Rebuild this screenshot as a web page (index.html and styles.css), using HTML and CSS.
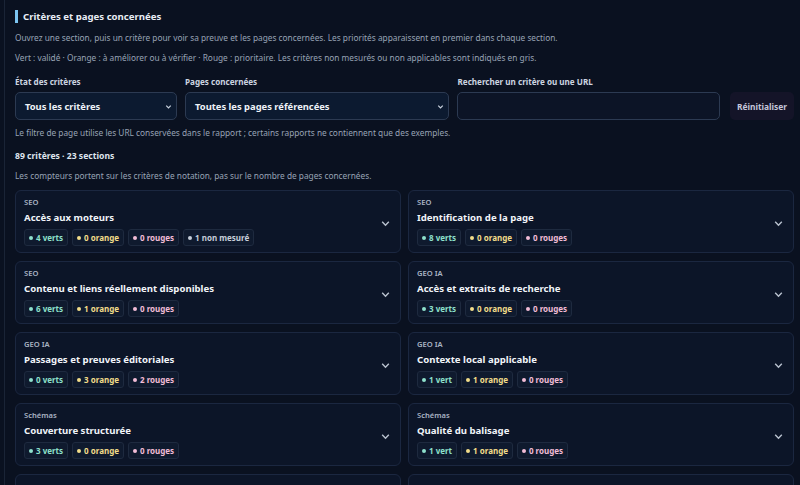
FILE: index.html
```html
<!DOCTYPE html>
<html lang="fr">

<head>
    <meta charset="UTF-8">
    <meta name="viewport" content="width=device-width, initial-scale=1.0">
    <title>Critères et pages concernées</title>
    <link rel="stylesheet" href="styles.css">
</head>

<body>

    <div class="panel">
        <h2 class="titre">Critères et pages concernées</h2>
        <p class="texte">Ouvrez une section, puis un critère pour voir sa preuve et les pages concernées. Les priorités apparaissent en premier dans chaque section.</p>
        <p class="texte">Vert : validé · Orange : à améliorer ou à vérifier · Rouge : prioritaire. Les critères non mesurés ou non applicables sont indiqués en gris.</p>

        <div class="filtres">
            <div class="champ champ-etat">
                <label>État des critères</label>
                <div class="select">Tous les critères
                    <svg viewBox="0 0 10 10"><path d="M2.5 4l2.5 2.5 2.5-2.5"/></svg>
                </div>
            </div>
            <div class="champ champ-pages">
                <label>Pages concernées</label>
                <div class="select">Toutes les pages référencées
                    <svg viewBox="0 0 10 10"><path d="M2.5 4l2.5 2.5 2.5-2.5"/></svg>
                </div>
            </div>
            <div class="champ champ-recherche">
                <label>Rechercher un critère ou une URL</label>
                <input type="text">
            </div>
            <button class="btn-reset">Réinitialiser</button>
        </div>

        <p class="texte">Le filtre de page utilise les URL conservées dans le rapport ; certains rapports ne contiennent que des exemples.</p>
        <p class="compte">89 critères · 23 sections</p>
        <p class="texte">Les compteurs portent sur les critères de notation, pas sur le nombre de pages concernées.</p>

        <div class="grille">
            <div class="carte">
                <div class="carte-info">
                    <div class="categorie">SEO</div>
                    <div class="nom">Accès aux moteurs</div>
                    <div class="puces">
                        <span class="puce vert">4 verts</span>
                        <span class="puce orange">0 orange</span>
                        <span class="puce rouge">0 rouges</span>
                        <span class="puce gris">1 non mesuré</span>
                    </div>
                </div>
                <svg class="chevron" viewBox="0 0 10 10"><path d="M2 3.5l3 3 3-3"/></svg>
            </div>
            <div class="carte">
                <div class="carte-info">
                    <div class="categorie">SEO</div>
                    <div class="nom">Identification de la page</div>
                    <div class="puces">
                        <span class="puce vert">8 verts</span>
                        <span class="puce orange">0 orange</span>
                        <span class="puce rouge">0 rouges</span>
                    </div>
                </div>
                <svg class="chevron" viewBox="0 0 10 10"><path d="M2 3.5l3 3 3-3"/></svg>
            </div>
            <div class="carte">
                <div class="carte-info">
                    <div class="categorie">SEO</div>
                    <div class="nom">Contenu et liens réellement disponibles</div>
                    <div class="puces">
                        <span class="puce vert">6 verts</span>
                        <span class="puce orange">1 orange</span>
                        <span class="puce rouge">0 rouges</span>
                    </div>
                </div>
                <svg class="chevron" viewBox="0 0 10 10"><path d="M2 3.5l3 3 3-3"/></svg>
            </div>
            <div class="carte">
                <div class="carte-info">
                    <div class="categorie">GEO IA</div>
                    <div class="nom">Accès et extraits de recherche</div>
                    <div class="puces">
                        <span class="puce vert">3 verts</span>
                        <span class="puce orange">0 orange</span>
                        <span class="puce rouge">0 rouges</span>
                    </div>
                </div>
                <svg class="chevron" viewBox="0 0 10 10"><path d="M2 3.5l3 3 3-3"/></svg>
            </div>
            <div class="carte">
                <div class="carte-info">
                    <div class="categorie">GEO IA</div>
                    <div class="nom">Passages et preuves éditoriales</div>
                    <div class="puces">
                        <span class="puce vert">0 verts</span>
                        <span class="puce orange">3 orange</span>
                        <span class="puce rouge">2 rouges</span>
                    </div>
                </div>
                <svg class="chevron" viewBox="0 0 10 10"><path d="M2 3.5l3 3 3-3"/></svg>
            </div>
            <div class="carte">
                <div class="carte-info">
                    <div class="categorie">GEO IA</div>
                    <div class="nom">Contexte local applicable</div>
                    <div class="puces">
                        <span class="puce vert">1 vert</span>
                        <span class="puce orange">1 orange</span>
                        <span class="puce rouge">0 rouges</span>
                    </div>
                </div>
                <svg class="chevron" viewBox="0 0 10 10"><path d="M2 3.5l3 3 3-3"/></svg>
            </div>
            <div class="carte">
                <div class="carte-info">
                    <div class="categorie">Schémas</div>
                    <div class="nom">Couverture structurée</div>
                    <div class="puces">
                        <span class="puce vert">3 verts</span>
                        <span class="puce orange">0 orange</span>
                        <span class="puce rouge">0 rouges</span>
                    </div>
                </div>
                <svg class="chevron" viewBox="0 0 10 10"><path d="M2 3.5l3 3 3-3"/></svg>
            </div>
            <div class="carte">
                <div class="carte-info">
                    <div class="categorie">Schémas</div>
                    <div class="nom">Qualité du balisage</div>
                    <div class="puces">
                        <span class="puce vert">1 vert</span>
                        <span class="puce orange">1 orange</span>
                        <span class="puce rouge">0 rouges</span>
                    </div>
                </div>
                <svg class="chevron" viewBox="0 0 10 10"><path d="M2 3.5l3 3 3-3"/></svg>
            </div>
            <div class="carte"></div>
            <div class="carte"></div>
        </div>
    </div>

</body>

</html>
```

FILE: styles.css
```css
body {
    background: #0a1120;
    color: #9aa6b8;
    font-family: "Noto Sans", Arial, sans-serif;
    margin: 0;
    overflow: hidden;
}

.panel {
    margin-left: 4px;
    border-left: 1px solid #1a2436;
    padding: 10px 6px 0 10px;
}

.titre {
    margin: 0 0 9px;
    border-left: 3px solid #7cc4f0;
    padding-left: 5px;
    font-size: 9.6px;
    line-height: 13px;
    color: #e8edf5;
    font-weight: 700;
}

.texte {
    margin: 0 0 8px;
    font-size: 8.3px;
    line-height: 12px;
    color: #98a3b5;
}

.filtres {
    display: flex;
    align-items: flex-end;
    gap: 8px;
    margin: 12px 0 7px;
}

.champ {
    display: flex;
    flex-direction: column;
    gap: 5px;
}

.champ label {
    font-size: 8.1px;
    font-weight: 700;
    color: #cdd5e1;
    line-height: 11px;
}

.champ-etat {
    width: 163px;
}

.champ-pages {
    width: 266px;
}

.champ-recherche {
    width: 264px;
}

.select,
.champ input {
    box-sizing: border-box;
    height: 28px;
    border: 1px solid #2c3a52;
    border-radius: 5px;
    background: #0c1a30;
    display: flex;
    align-items: center;
    justify-content: space-between;
    padding: 0 3px 0 9px;
    font-size: 9.4px;
    font-weight: 700;
    color: #eef2f8;
}

.champ input {
    background: #0c1426;
    width: 100%;
    font-family: inherit;
}

.select svg {
    width: 9px;
    height: 9px;
    fill: none;
    stroke: #c8d0dc;
    stroke-width: 1.4;
}

.btn-reset {
    margin-left: 2px;
    height: 28px;
    padding: 0 7px;
    border: none;
    border-radius: 5px;
    background: #141428;
    color: #c5c6da;
    font-family: inherit;
    font-size: 8.4px;
    font-weight: 700;
}

.compte {
    margin: 11px 0 8px;
    font-size: 8.6px;
    line-height: 12px;
    font-weight: 700;
    color: #dfe5ee;
}

.grille {
    display: grid;
    grid-template-columns: 1fr 1fr;
    gap: 8px 7px;
    margin-top: 7px;
}

.carte {
    box-sizing: border-box;
    height: 63px;
    border: 1px solid #1b2740;
    border-radius: 6px;
    background: #0c1528;
    display: flex;
    align-items: center;
    justify-content: space-between;
    padding: 0 9px 0 8px;
}

.categorie {
    font-size: 7.6px;
    line-height: 10px;
    color: #aab4c4;
    font-weight: 600;
}

.nom {
    margin-top: 4px;
    font-size: 9.6px;
    line-height: 13px;
    font-weight: 700;
    color: #f1f4f9;
}

.puces {
    display: flex;
    gap: 4px;
    margin-top: 5px;
}

.puce {
    display: flex;
    align-items: center;
    gap: 3px;
    height: 17px;
    box-sizing: border-box;
    padding: 0 4px;
    border: 1px solid #1e2a3f;
    border-radius: 3px;
    background: #0f1a2e;
    font-size: 8px;
    font-weight: 700;
}

.puce::before {
    content: "";
    width: 4px;
    height: 4px;
    border-radius: 50%;
    background: currentColor;
}

.vert {
    color: #8ee0cc;
}

.orange {
    color: #f3dd8a;
}

.rouge {
    color: #f2bcd6;
}

.gris {
    color: #c6ceda;
}

.chevron {
    width: 11px;
    height: 11px;
    fill: none;
    stroke: #b9c2cf;
    stroke-width: 1.3;
    margin-top: 4px;
}
```
